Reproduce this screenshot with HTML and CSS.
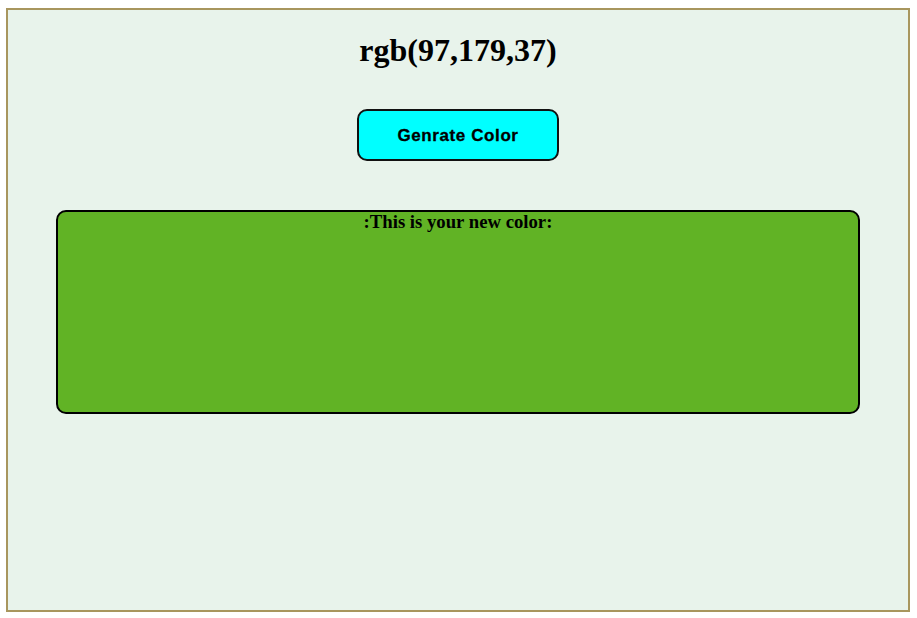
FILE: index.html
```html
<!DOCTYPE html>
<html>
<head>
<meta charset="utf-8">
<link rel="stylesheet" href="styles.css">
</head>
<body>
<div class="container">
  <h1 class="title">rgb(97,179,37)</h1>
  <button class="gen-btn">Genrate Color</button>
  <div class="color-box">
    <h3 class="box-label">:This is your new color:</h3>
  </div>
</div>
</body>
</html>
```
FILE: styles.css
```css
html, body {
  margin: 0;
  padding: 0;
  background: #ffffff;
}
body {
  padding: 8px 0 0 6px;
  font-family: "Liberation Serif", "Times New Roman", serif;
}
.container {
  width: 900px;
  height: 600px;
  margin: 0;
  border: 2px solid #a8965e;
  background: #e8f3eb;
  display: flex;
  flex-direction: column;
  align-items: center;
}
.title {
  margin: 22px 0 0 0;
  font-size: 32px;
  font-weight: bold;
  color: #000;
  line-height: 36px;
}
.gen-btn {
  margin-top: 41px;
  width: 202px;
  height: 52px;
  background: #00ffff;
  border: 2px solid #111;
  border-radius: 10px;
  font-family: "Liberation Sans", Arial, sans-serif;
  font-weight: bold;
  font-size: 17px;
  letter-spacing: 0.6px;
  -webkit-text-stroke: 0.3px #000;
  color: #000;
  padding: 2px 0 0 0;
}
.color-box {
  margin-top: 49px;
  width: 800px;
  height: 200px;
  background: rgb(97,179,37);
  border: 2px solid #000;
  border-radius: 10px;
}
.box-label {
  margin: 0;
  text-align: center;
  font-size: 18.72px;
  font-weight: bold;
  line-height: 20px;
  padding-top: 0;
}
```
